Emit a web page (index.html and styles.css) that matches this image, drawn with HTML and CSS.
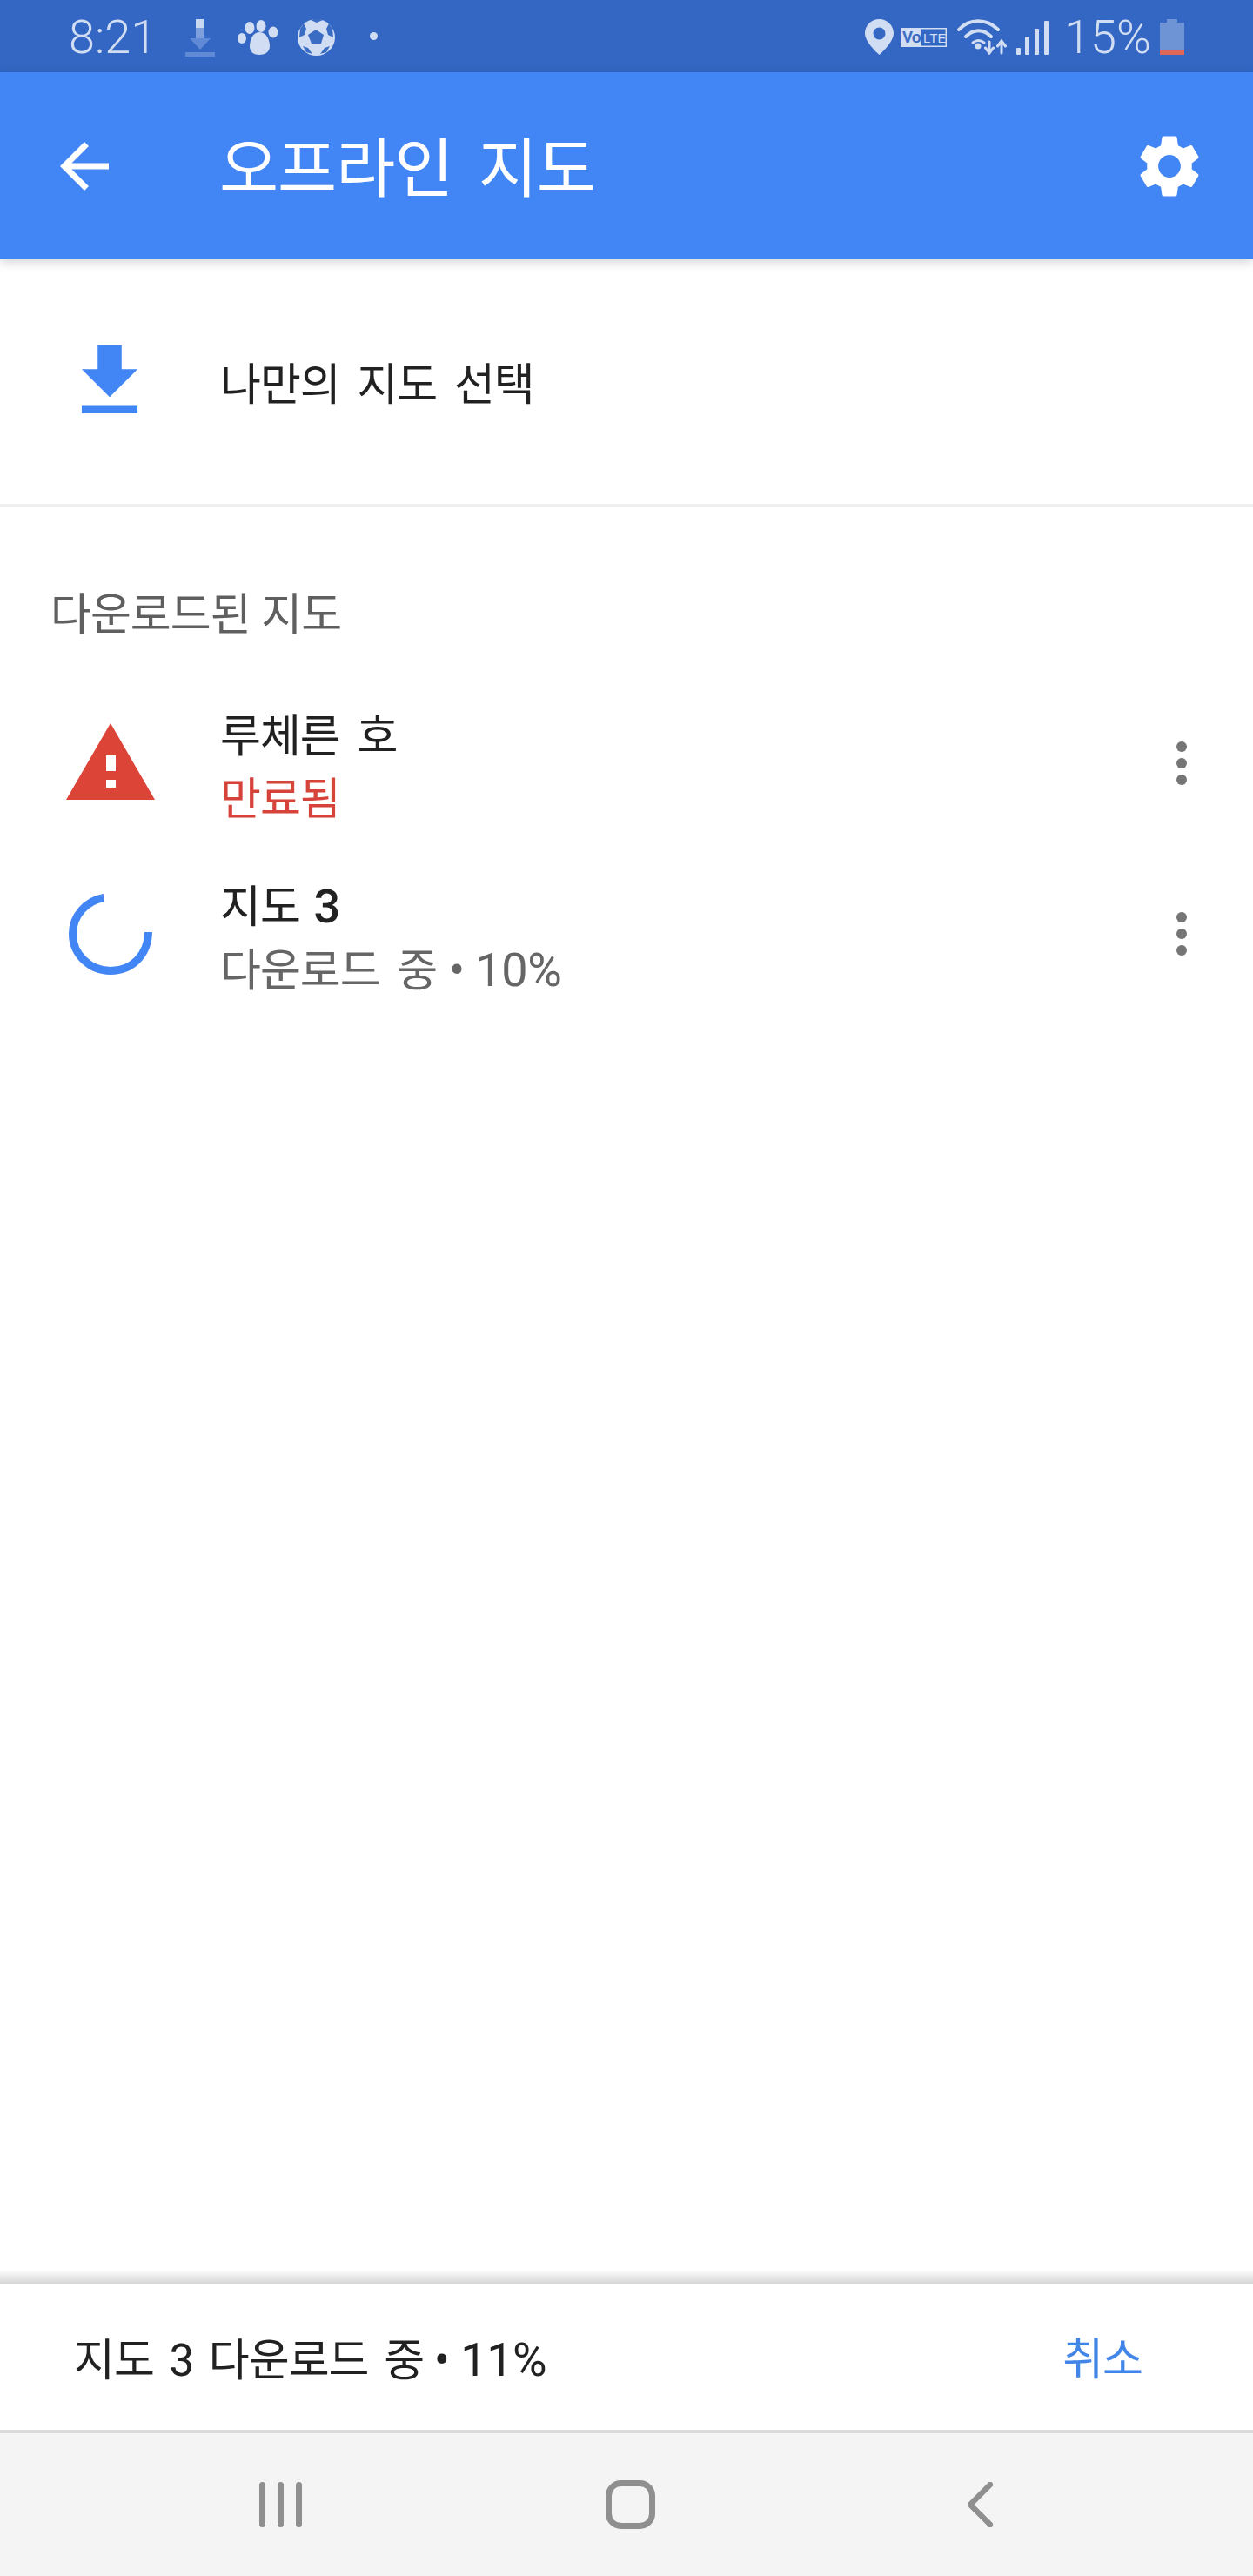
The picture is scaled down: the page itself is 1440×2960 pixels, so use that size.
FILE: index.html
```html
<!DOCTYPE html>
<html lang="ko">
<head>
<meta charset="utf-8">
<title>오프라인 지도</title>
<link rel="stylesheet" href="styles.css">
</head>
<body>
<div class="phone">
  <header class="statusbar">
    <span class="clock">8:21</span>
    <svg class="st-dl" viewBox="0 0 34 43"><rect x="12" y="0" width="9" height="10" fill="#c9d8f2"/><rect x="12" y="10" width="9" height="13" fill="#7f9fdc"/><path d="M5 22h24L17 35z" fill="#6089d6"/><rect x="0" y="38" width="34" height="5" fill="#6089d6"/></svg>
    <svg class="st-paw" viewBox="0 0 47 40" fill="#d0ddf3"><ellipse cx="5" cy="21" rx="5" ry="6"/><ellipse cx="14" cy="9" rx="5.5" ry="7"/><ellipse cx="27" cy="7" rx="5.5" ry="7"/><ellipse cx="41" cy="14" rx="5.5" ry="6.5"/><path d="M25 14c9 0 12 10 12 16 0 7-6 10-12 10s-11-3-11-10c0-6 3-16 11-16z"/></svg>
    <svg class="st-ball" viewBox="0 0 43 42"><ellipse cx="21.500" cy="21" rx="21.500" ry="21" fill="#d0ddf3"/><path d="M21 12l9 6-3 10H16l-4-10zM15 1l7 3 7-3-7-2zM3 11l4-6 3 6-2 7-6 3zM40 11l-4-6-3 6 2 7 6 3zM12 33l5 7-7-2-4-7zM31 33l-5 7 7-2 4-7z" fill="#3b6cc4"/></svg>
    <span class="st-dot"></span>
    <svg class="st-pin" viewBox="0 0 33 41"><path fill-rule="evenodd" d="M16.500 0C7.400 0 0 7.300 0 16.300 0 27 16.500 41 16.500 41S33 27 33 16.300C33 7.300 25.600 0 16.500 0zm0 9.500a7 7 0 1 1 0 14 7 7 0 0 1 0-14z" fill="#d0ddf3"/></svg>
    <svg class="st-volte" viewBox="0 0 53 22"><rect x=".75" y=".75" width="51.500" height="20.500" fill="none" stroke="#d0ddf3" stroke-width="1.500"/><rect x="0" y="0" width="24" height="22" fill="#d0ddf3"/><text x="2" y="17" class="volte-a">Vo</text><text x="26" y="16.500" class="volte-b">LTE</text></svg>
    <svg class="st-wifi" viewBox="0 0 57 41" fill="none" stroke="#d0ddf3" stroke-linecap="round"><path d="M2 12C14 -1 34 -1 47 12" stroke-width="4"/><path d="M10 20C19 11 30 11 39 20" stroke-width="4"/><path d="M18 27c4-3 9-3 13 0" stroke-width="3"/><circle cx="24" cy="31" r="3.500" fill="#d0ddf3" stroke="none"/><path d="M37 26v12M32.500 33l4.500 6 4.500-6" stroke-width="3"/><path d="M51 39V25M46.500 31l4.500-6 4.500 6" stroke-width="3"/></svg>
    <svg class="st-signal" viewBox="0 0 37 39" fill="#d0ddf3"><rect x="0" y="31" width="5" height="8" rx="1"/><rect x="10" y="18" width="5" height="21" rx="1"/><rect x="21" y="9" width="5" height="30" rx="1"/><rect x="32" y="0" width="5" height="39" rx="1"/></svg>
    <span class="pct">15%</span>
    <svg class="st-batt" viewBox="0 0 28 41"><path d="M8 0h12v4h7a1 1 0 0 1 1 1v36H0V5a1 1 0 0 1 1-1h7z" fill="#6f94d6"/><rect x="0" y="35" width="28" height="6" fill="#e0665a"/></svg>
  </header>

  <div class="appbar">
    <svg class="ic-back" viewBox="0 0 24 24"><path d="M20 11H7.830l5.590-5.590L12 4l-8 8 8 8 1.410-1.410L7.830 13H20v-2z" fill="#fff"/></svg>
    <h1 class="title">오프라인 지도</h1>
    <svg class="ic-gear" viewBox="0 0 24 24"><path fill="#fff" d="M19.140 12.940c.04-.3.06-.61.06-.94 0-.32-.02-.64-.07-.94l2.030-1.580c.18-.14.23-.41.12-.61l-1.920-3.320c-.12-.22-.37-.29-.59-.22l-2.390.96c-.5-.38-1.030-.7-1.620-.94l-.36-2.540c-.04-.24-.24-.41-.48-.41h-3.840c-.24 0-.43.17-.47.41l-.36 2.540c-.59.24-1.130.57-1.620.94l-2.390-.96c-.22-.08-.47 0-.59.22L2.740 8.870c-.12.21-.08.47.12.61l2.030 1.580c-.05.3-.09.63-.09.94s.02.64.07.94l-2.030 1.580c-.18.14-.23.41-.12.61l1.920 3.320c.12.22.37.29.59.22l2.390-.96c.5.38 1.030.7 1.620.94l.36 2.540c.05.24.24.41.48.41h3.840c.24 0 .44-.17.47-.41l.36-2.540c.59-.24 1.130-.56 1.620-.94l2.390.96c.22.08.47 0 .59-.22l1.920-3.320c.12-.22.07-.47-.12-.61l-2.010-1.580zM12 15.600c-1.980 0-3.600-1.620-3.600-3.600s1.620-3.600 3.600-3.600 3.600 1.620 3.600 3.600-1.620 3.600-3.600 3.600z"/></svg>
  </div>

  <main class="content">
    <section class="pick">
      <svg class="ic-download" viewBox="0 0 24 24" preserveAspectRatio="none"><path d="M19 9h-4V3H9v6H5l7 7 7-7zM5 18v2h14v-2H5z" fill="#4285f4"/></svg>
      <span class="pick-label">나만의 지도 선택</span>
    </section>
    <h2 class="section-head">다운로드된 지도</h2>
    <ul class="maps">
      <li class="map">
        <div class="map-icon">
          <svg class="ic-warn" viewBox="0 0 102 88"><path fill-rule="evenodd" d="M51 0l51 88H0zM46 37v18h11V37zm0 28v9h11v-9z" fill="#db4437"/></svg>
        </div>
        <div class="map-text">
          <div class="map-name">루체른 호</div>
          <div class="map-sub expired">만료됨</div>
        </div>
        <svg class="ic-more" viewBox="0 0 12 50"><circle cx="6" cy="6" r="6"/><circle cx="6" cy="25" r="6"/><circle cx="6" cy="44" r="6"/></svg>
      </li>
      <li class="map">
        <div class="map-icon">
          <svg class="ic-spin" viewBox="0 0 96 94"><path d="M40.500 5.500C20 9 4.500 26 4.500 47c0 23.500 19.500 42.500 43.500 42.500S91 72 91.500 45" fill="none" stroke="#4285f4" stroke-width="9"/></svg>
        </div>
        <div class="map-text">
          <div class="map-name">지도 <span class="num-strong">3</span></div>
          <div class="map-sub">다운로드 중 <span class="num">• 10%</span></div>
        </div>
        <svg class="ic-more" viewBox="0 0 12 50"><circle cx="6" cy="6" r="6"/><circle cx="6" cy="25" r="6"/><circle cx="6" cy="44" r="6"/></svg>
      </li>
    </ul>
  </main>

  <div class="snack-shadow"></div>
  <div class="snack">
    <span class="snack-text">지도 3 다운로드 중 <span class="num">• 11%</span></span>
    <span class="snack-action">취소</span>
  </div>

  <nav class="navbar">
    <svg class="nav-recent" viewBox="0 0 49 52" fill="#8f8f8f"><rect x="0" y="0" width="7" height="52" rx="3.500"/><rect x="21" y="0" width="7" height="52" rx="3.500"/><rect x="42" y="0" width="7" height="52" rx="3.500"/></svg>
    <svg class="nav-home" viewBox="0 0 57 56"><rect x="3.500" y="3.500" width="50" height="49" rx="14" fill="none" stroke="#8f8f8f" stroke-width="7"/></svg>
    <svg class="nav-back" viewBox="0 0 29 52"><path d="M26 3L3 26l23 23" fill="none" stroke="#8f8f8f" stroke-width="6.500" stroke-linecap="round" stroke-linejoin="round"/></svg>
  </nav>
</div>
</body>
</html>
```
FILE: styles.css
```css
* { box-sizing: border-box; }
html, body { margin: 0; padding: 0; background: #fff; }
body { font-family: Roboto, "Noto Sans CJK KR", "Noto Sans", sans-serif; color: #212121; }
svg { display: block; flex: none; }
h1, h2, ul { margin: 0; padding: 0; font-weight: 400; }
ul { list-style: none; }

.phone { width: 1440px; height: 2960px; display: flex; flex-direction: column; overflow: hidden; }

/* status bar */
.statusbar { height: 83px; background: #3367c3; color: #d0ddf3; display: flex; align-items: center; padding: 0 79px 0 79px; flex: none; }
.clock, .pct { font-size: 54px; font-weight: 300; line-height: 60px; position: relative; top: 1px; }
.clock { width: 97px; }
.st-dl { width: 34px; height: 43px; margin-left: 37px; margin-top: 4px; }
.st-paw { width: 47px; height: 40px; margin-left: 26px; margin-top: 3px; }
.st-ball { width: 43px; height: 42px; margin-left: 22px; margin-top: 3px; }
.st-dot { width: 9px; height: 9px; border-radius: 50%; background: #d0ddf3; margin-left: 40px; }
.st-pin { width: 33px; height: 41px; margin-left: auto; margin-top: 2px; }
.st-volte { width: 53px; height: 22px; margin-left: 8px; margin-top: 2px; }
.volte-a, .volte-b { font-family: "Liberation Sans", sans-serif; font-size: 18px; font-weight: 700; }
.volte-a { fill: #3b6cc4; }
.volte-b { fill: #d0ddf3; font-size: 15px; font-weight: 400; }
.st-wifi { width: 57px; height: 41px; margin-left: 12px; margin-top: 2px; }
.st-signal { width: 37px; height: 39px; margin-left: 11px; margin-top: 4px; }
.pct { width: 98px; margin-left: 18px; white-space: nowrap; }
.st-batt { width: 28px; height: 41px; margin-left: 12px; margin-top: 2px; }

/* app bar */
.appbar { height: 215px; background: #4285f4; display: flex; align-items: center; padding: 0 53px 0 55px; flex: none; box-shadow: 0 3px 12px rgba(0,0,0,.18); position: relative; }
.ic-back { width: 84px; height: 84px; }
.title { font-size: 74px; line-height: 90px; letter-spacing: -1px; color: #fff; margin-left: 113px; padding-top: 9px; word-spacing: 12px; white-space: nowrap; }
.ic-gear { width: 86px; height: 86px; margin-left: auto; }

/* content */
.content { flex: 1; min-height: 0; }
.pick { height: 285px; border-bottom: 4px solid #f0f0f0; display: flex; align-items: center; padding: 0 0 2px 71px; }
.ic-download { width: 110px; height: 110px; }
.pick-label { font-size: 51px; line-height: 60px; letter-spacing: -1px; margin-left: 72px; padding-top: 10px; word-spacing: 8px; white-space: nowrap; }
.section-head { font-size: 51px; line-height: 60px; letter-spacing: -1px; color: #5f5f5f; padding: 94px 0 0 58px; word-spacing: 1px; }
.maps { padding-top: 40px; }
.map { height: 196px; display: flex; align-items: center; padding: 4px 76px 0 0; }
.map-icon { width: 253px; display: flex; justify-content: center; }
.ic-warn { width: 102px; height: 88px; position: relative; top: -2px; }
.ic-spin { width: 96px; height: 94px; }
.map-text { flex: 1; padding-top: 11px; }
.map-name, .map-sub { font-size: 51px; line-height: 72px; letter-spacing: -1px; word-spacing: 8px; white-space: nowrap; }
.map-sub { color: #666; }
.map-sub.expired { color: #d6433b; }
.num { font-size: 54px; word-spacing: 0; letter-spacing: -.5px; margin-left: -6px; }
.num-strong { font-size: 54px; font-weight: 500; margin-left: -4px; }
.ic-more { width: 12px; height: 50px; fill: #757575; }

/* snackbar */
.snack-shadow { height: 16px; background: linear-gradient(to bottom, #fff, #d6d6d6); flex: none; }
.snack { height: 168px; background: #fff; display: flex; align-items: center; justify-content: space-between; padding: 8px 127px 0 85px; flex: none; }
.snack-text, .snack-action { font-size: 51px; line-height: 60px; letter-spacing: -1px; word-spacing: 6px; white-space: nowrap; }
.snack-action { color: #4285e8; }

/* nav bar */
.navbar { height: 168px; background: #f4f4f4; border-top: 4px solid #dcdcdc; display: flex; align-items: center; padding: 0 0 0 298px; flex: none; }
.nav-recent { width: 49px; height: 52px; }
.nav-home { width: 57px; height: 56px; margin-left: 349px; }
.nav-back { width: 29px; height: 52px; margin-left: 359px; }
```
